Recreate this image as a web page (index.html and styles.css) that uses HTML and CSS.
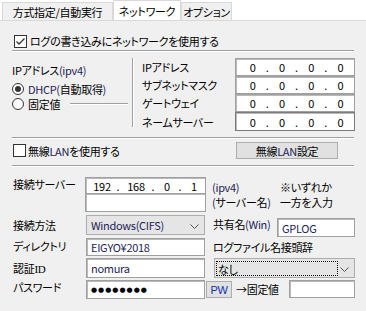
FILE: index.html
```html
<!DOCTYPE html>
<html lang="ja">
<head>
<meta charset="utf-8">
<title>ネットワーク</title>
<link rel="stylesheet" href="styles.css">
</head>
<body>
<div class="tabs">
  <div class="tab t1">方式指定/自動実行</div>
  <div class="tab t2 sel">ネットワーク</div>
  <div class="tab t3">オプション</div>
</div>
<div class="panel">
  <div class="chk-row">
    <span class="chk"><svg width="11" height="11" viewBox="0 0 11 11"><polyline points="1.5,5.5 4,8 9.5,2.5" fill="none" stroke="#333" stroke-width="1.3"/></svg></span>
    <span>ログの書き込みにネットワークを使用する</span>
  </div>
  <div class="sep"></div>

  <div class="ipgroup">
    <div class="ip-left">
      <div class="ip-title">IPアドレス<span class="lat">(ipv4)</span></div>
      <div class="radio-row r1"><span class="radio on"></span><span><span class="lat">DHCP(</span>自動取得<span class="lat">)</span></span></div>
      <div class="radio-row r2"><span class="radio"></span><span>固定値</span><span class="gline"></span></div>
    </div>
    <div class="vline"></div>
    <div class="ip-right">
      <div class="ip-row"><span class="ip-label">IPアドレス</span><div class="ipbox"><span>0</span><i>.</i><span>0</span><i>.</i><span>0</span><i>.</i><span>0</span></div></div>
      <div class="ip-row"><span class="ip-label">サブネットマスク</span><div class="ipbox"><span>0</span><i>.</i><span>0</span><i>.</i><span>0</span><i>.</i><span>0</span></div></div>
      <div class="ip-row"><span class="ip-label">ゲートウェイ</span><div class="ipbox"><span>0</span><i>.</i><span>0</span><i>.</i><span>0</span><i>.</i><span>0</span></div></div>
      <div class="ip-row last"><span class="ip-label">ネームサーバー</span><div class="ipbox focus"><span>0</span><i>.</i><span>0</span><i>.</i><span>0</span><i>.</i><span>0</span></div></div>
    </div>
  </div>
  <div class="sep"></div>

  <div class="wlan-row">
    <span class="chk"></span>
    <span class="wlan-text">無線<span class="lat">LAN</span>を使用する</span>
    <div class="btn wlan-btn">無線<span class="lat">LAN</span>設定</div>
  </div>
  <div class="sep"></div>

  <div class="form">
    <div class="lbl l1">接続サーバー</div>
    <div class="field f1 ipserver"><span>192</span><i>.</i><span>168</span><i>.</i><span>0</span><i>.</i><span>1</span></div>
    <div class="field f2"></div>
    <div class="note">
      <div class="note-a"><div class="lat">(ipv4)</div><div><span class="lat">(</span>サーバー名<span class="lat">)</span></div></div>
      <div class="note-b"><div>※いずれか</div><div>一方を入力</div></div>
    </div>

    <div class="lbl l3">接続方法</div>
    <div class="combo c1"><span class="lat">Windows(CIFS)</span><svg class="arrow" width="9" height="5" viewBox="0 0 9 5"><polyline points="0.5,0.5 4.5,4.5 8.5,0.5" fill="none" stroke="#555" stroke-width="1"/></svg></div>
    <div class="share"><span class="share-lbl">共有名<span class="lat">(Win)</span></span><div class="field gplog lat">GPLOG</div></div>

    <div class="lbl l4">ディレクトリ</div>
    <div class="field f4 lat">EIGYO¥2018</div>
    <div class="prefix">ログファイル名接頭辞</div>

    <div class="lbl l5">認証<span class="idtxt">ID</span></div>
    <div class="field f5 lat">nomura</div>
    <div class="combo c2"><span class="focusrect">なし</span><svg class="arrow" width="9" height="5" viewBox="0 0 9 5"><polyline points="0.5,0.5 4.5,4.5 8.5,0.5" fill="none" stroke="#555" stroke-width="1"/></svg></div>

    <div class="lbl l6">パスワード</div>
    <div class="field f6 pw">●●●●●●●●</div>
    <div class="pwrow"><div class="btn pwbtn">PW</div><span class="fixed">→固定値</span><div class="field fixbox"></div></div>
  </div>
</div>
</body>
</html>
```

FILE: styles.css
```css
* { box-sizing: border-box; }
html, body { margin: 0; padding: 0; }
body {
  width: 366px;
  height: 311px;
  overflow: hidden;
  background: #ffffff;
  font-family: "Noto Sans CJK JP", sans-serif;
  font-size: 11px;
  line-height: 14px;
  letter-spacing: -0.3px;
  color: #000;
  font-feature-settings: "palt";
  white-space: nowrap;
}
.lat { color: #1c1c58; }

/* tabs */
.tabs {
  display: flex;
  align-items: flex-end;
  height: 20px;
  padding-left: 2px;
}
.tab {
  height: 18px;
  border: 1px solid #d9d9d9;
  border-bottom: none;
  background: #f0f0f0;
  display: flex;
  align-items: center;
  justify-content: center;
  padding-top: 1px;
}
.t1 { width: 111px; }
.t2 { width: 68px; }
.t3 { width: 51px; }
.tab.sel { height: 20px; background: #fff; padding-top: 0; }

/* panel */
.panel {
  height: 291px;
  background: #f0f0f0;
  border-top: 1px solid #d9d9d9;
  padding: 11px 0 0 12px;
}
.chk-row {
  display: flex;
  align-items: center;
  height: 18px;
  gap: 3px;
  padding-left: 2px;
}
.chk {
  width: 13px;
  height: 13px;
  border: 1px solid #333;
  background: #fff;
  display: flex;
  align-items: center;
  justify-content: center;
  flex: none;
}
.chk svg { display: block; }
.sep {
  width: 342px;
  height: 2px;
  border-top: 1px solid #a0a0a0;
  border-bottom: 1px solid #fff;
}

/* ip group */
.ipgroup {
  display: flex;
  margin-top: 6px;
  height: 73px;
}
.ip-left {
  width: 120px;
  padding-top: 5px;
}
.ip-title { height: 14px; }
.radio-row {
  display: flex;
  align-items: center;
  height: 15px;
  gap: 4px;
}
.radio-row.r1 { margin-top: 4px; }
.radio {
  width: 12px;
  height: 12px;
  border: 1px solid #333;
  border-radius: 50%;
  background: #fff;
  flex: none;
  display: flex;
  align-items: center;
  justify-content: center;
}
.radio.on::after {
  content: "";
  width: 6px;
  height: 6px;
  border-radius: 50%;
  background: #333;
}
.gline {
  flex: 1;
  height: 2px;
  border-top: 1px solid #a0a0a0;
  border-bottom: 1px solid #fff;
  margin-left: 6px;
  margin-right: 4px;
}
.vline {
  width: 2px;
  height: 69px;
  border-left: 1px solid #a0a0a0;
  border-right: 1px solid #fff;
}
.ip-right { margin-left: 8px; }
.ip-row {
  display: flex;
  align-items: center;
  height: 18px;
}
.ip-row.last { height: 19px; }
.ip-label { width: 93px; }
.ipbox {
  width: 120px;
  height: 100%;
  background: #fff;
  border: 1px solid #a0a0a0;
  box-shadow: inset 1px 1px 0 #b9b9b9;
  display: grid;
  grid-template-columns: 1fr auto 1fr auto 1fr auto 1fr;
  align-items: center;
  text-align: center;
  padding: 0 1px 0 4px;
}
.ipbox.focus { border-color: #7a7a7a; }
.ipbox i, .ipserver i { font-style: normal; width: 4px; }

/* wlan */
.wlan-row {
  display: flex;
  align-items: center;
  height: 17px;
  margin-top: 3px;
  width: 326px;
  padding-left: 1px;
}
.wlan-text { margin-left: 2px; }
.btn {
  background: #e1e1e1;
  border: 1px solid #adadad;
  display: flex;
  align-items: center;
  justify-content: center;
}
.wlan-btn {
  margin-left: auto;
  width: 102px;
  height: 17px;
}
.ipgroup + .sep { margin-top: 6px; }
.wlan-row + .sep { margin-top: 6px; }

/* form */
.form {
  margin-top: 10px;
  display: grid;
  grid-template-columns: 74px 119px 150px;
  grid-template-rows: 17px 18px 25px 20px 23px 19px;
}
.lbl {
  grid-column: 1;
  padding-left: 1px;
  align-self: center;
}
.l1 { grid-row: 1; margin-top: -3px; }
.l3 { grid-row: 3; margin-top: 1px; }
.l4 { grid-row: 4; margin-top: -2px; }
.l5 { grid-row: 5; }
.l6 { grid-row: 6; margin-top: -6px; }
.idtxt { font-family: "Liberation Serif", serif; }

.field {
  background: #fff;
  border: 1px solid #a0a0a0;
  box-shadow: inset 1px 1px 0 #b9b9b9;
  display: flex;
  align-items: center;
  padding-left: 4px;
}
.f1 { grid-column: 2; grid-row: 1; margin-left: -1px; margin-right: -1px; }
.f2 { grid-column: 2; grid-row: 2; margin-left: -1px; margin-right: -1px; border-top: none; }
.ipserver {
  display: grid;
  grid-template-columns: 28px auto 30px auto 22px auto 22px;
  text-align: center;
  padding-left: 2px;
}
.note {
  grid-column: 3;
  grid-row: 1 / 3;
  display: flex;
  padding-top: 3px;
  line-height: 15px;
}
.note-a { width: 75px; padding-left: 7px; }

.combo {
  background: #e5e5e5;
  border: 1px solid #adadad;
  display: flex;
  align-items: center;
  position: relative;
}
.combo .arrow { position: absolute; right: 5px; top: 8px; }
.c1 {
  grid-column: 2;
  grid-row: 3;
  margin-top: 3px;
  height: 20px;
  padding-left: 4px;
}
.share {
  grid-column: 3;
  grid-row: 3;
  display: flex;
  align-items: flex-start;
}
.share-lbl { margin-left: 8px; margin-top: 5px; width: 64px; }
.gplog {
  margin-top: 6px;
  width: 78px;
  height: 19px;
}
.f4 { grid-column: 2; grid-row: 4; margin-top: 1px; height: 18px; }
.prefix {
  grid-column: 3;
  grid-row: 4;
  margin-left: 8px;
  margin-top: 3px;
}
.f5 { grid-column: 2; grid-row: 5; margin-top: 1px; height: 20px; }
.c2 {
  grid-column: 3;
  grid-row: 5;
  margin-top: 1px;
  margin-left: 9px;
  height: 20px;
  width: 141px;
  padding: 2px 0 1px 1px;
  align-items: stretch;
}
.focusrect {
  width: 122px;
  border: 1px dotted #000;
  padding-left: 1px;
  display: flex;
  align-items: center;
}
.c2 .arrow { top: 8px; right: 5px; }
.f6 { grid-column: 2; grid-row: 6; height: 19px; }
.pw {
  font-family: "DejaVu Sans", sans-serif;
  font-size: 7px;
  letter-spacing: 1px;
  color: #000;
}
.pwrow {
  grid-column: 3;
  grid-row: 6;
  display: flex;
  align-items: flex-start;
}
.pwbtn {
  margin-left: 1px;
  margin-top: 1px;
  width: 26px;
  height: 17px;
  color: #1030b0;
  font-family: "Liberation Sans", sans-serif;
  font-size: 11px;
}
.fixed { margin-left: 4px; margin-top: 2px; width: 53px; }
.fixbox { width: 66px; height: 18px; }
```
